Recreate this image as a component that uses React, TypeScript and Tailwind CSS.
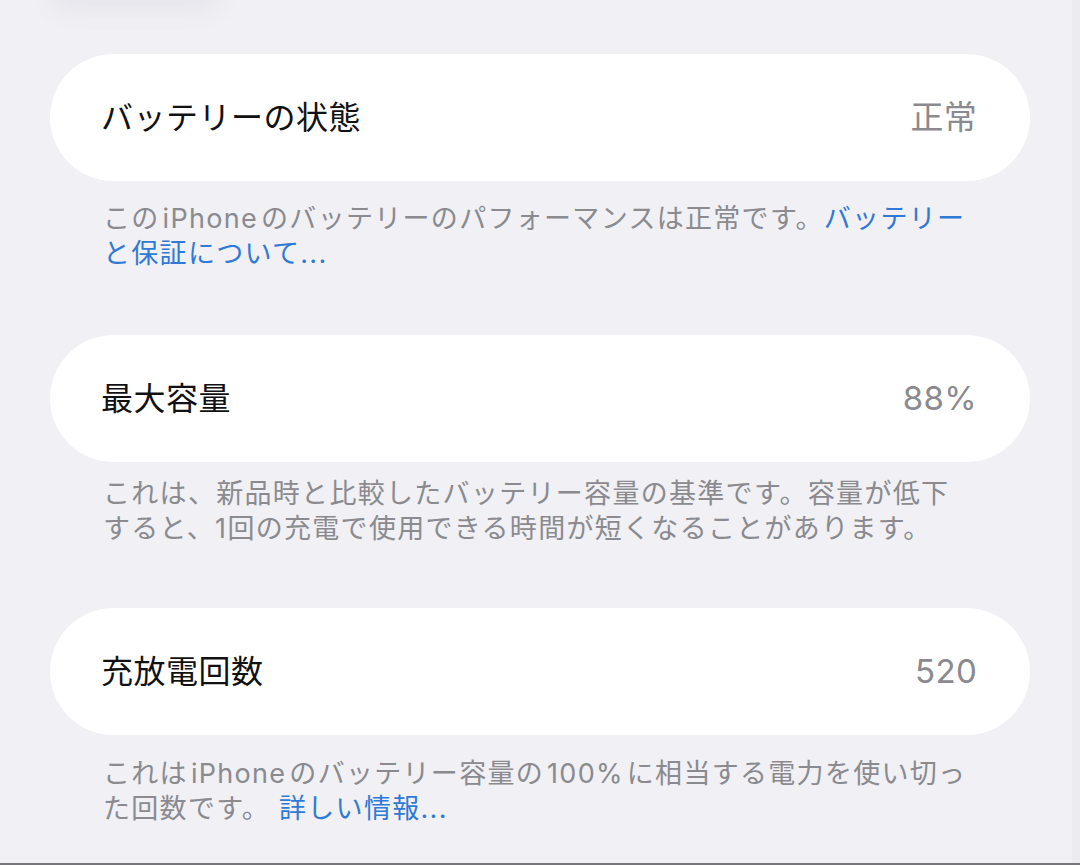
const font = {
  fontFamily: 'Inter, "Noto Sans CJK JP", "Noto Sans", sans-serif',
};

type Section = {
  title: string;
  value: string;
  lines: React.ReactNode[];
  cardMt: string;
  descMt: string;
};

// latin words inside japanese text get a small gap on both sides
const W = ({ children }: { children: React.ReactNode }) => (
  <span className="mx-[3px]">{children}</span>
);

const sections: Section[] = [
  {
    title: "バッテリーの状態",
    value: "正常",
    cardMt: "mt-[54px]",
    descMt: "mt-[20px]",
    lines: [
      <>
        この<W>iPhone</W>のバッテリーのパフォーマンスは正常です。
        <span className="text-[#2f7ad6]">バッテリー</span>
      </>,
      <span className="text-[#2f7ad6]">と保証について...</span>,
    ],
  },
  {
    title: "最大容量",
    value: "88%",
    cardMt: "mt-[64px]",
    descMt: "mt-[14px]",
    lines: [
      "これは、新品時と比較したバッテリー容量の基準です。容量が低下",
      "すると、1回の充電で使用できる時間が短くなることがあります。",
    ],
  },
  {
    title: "充放電回数",
    value: "520",
    cardMt: "mt-[62px]",
    descMt: "mt-[21px]",
    lines: [
      <>
        これは<W>iPhone</W>のバッテリー容量の<W>100%</W>に相当する電力を使い切っ
      </>,
      <>
        た回数です。 <span className="text-[#2f7ad6]">詳しい情報...</span>
      </>,
    ],
  },
];

export default function App() {
  return (
    <main
      className="relative h-[865px] w-[1080px] overflow-hidden border-b-2 border-[#76767b] bg-[#f0f0f5]"
      style={font}
    >
      {/* faint blurred edge of the row above */}
      <div className="pointer-events-none absolute -top-[24px] left-[50px] h-[36px] w-[170px] rounded-full bg-[#e6e6ec] blur-[10px]" />
      <div className="absolute right-0 top-0 h-full w-[8px] bg-[#ebebf0]" />

      <div className="mx-[50px] flex w-[980px] flex-col">
        {sections.map((s) => (
          <section key={s.title} className="flex flex-col">
            <div
              className={`${s.cardMt} flex h-[127px] items-center justify-between rounded-full bg-white pl-[51px] pr-[53px]`}
            >
              <span className="text-[32px] leading-none tracking-[0.5px] text-[#111113]">
                {s.title}
              </span>
              <span className="text-[33px] leading-none tracking-[0.3px] text-[#8a8a8f]">
                {s.value}
              </span>
            </div>
            <div
              className={`${s.descMt} flex flex-col pl-[53px] text-[27px] leading-[35px] tracking-[1.3px] text-[#8a8a8f]`}
            >
              {s.lines.map((l, i) => (
                <p key={i} className="whitespace-nowrap">
                  {l}
                </p>
              ))}
            </div>
          </section>
        ))}
      </div>
    </main>
  );
}
